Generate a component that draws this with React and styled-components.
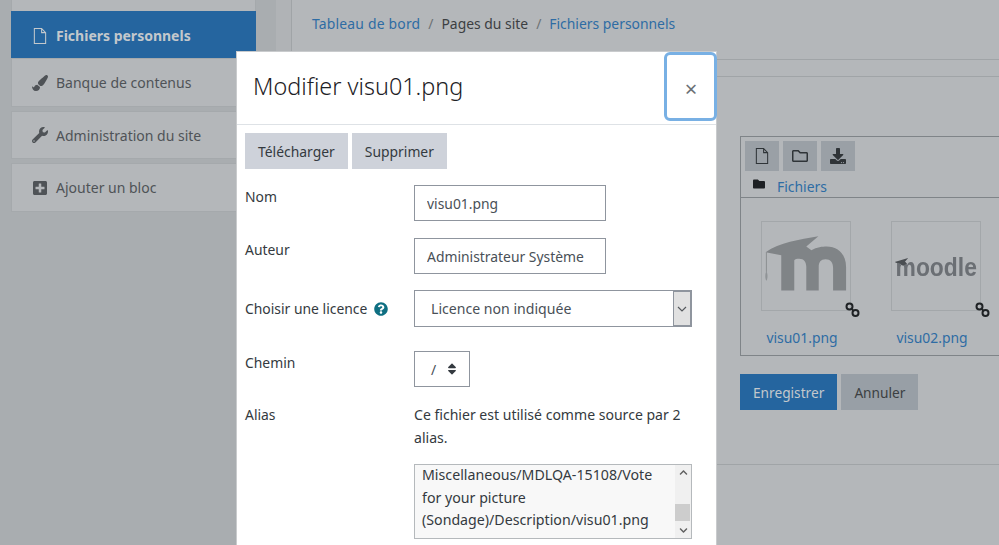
import { createGlobalStyle, styled } from "styled-components"
import {
    FaPaintBrush,
    FaWrench,
    FaPlusSquare,
    FaRegFolder,
    FaDownload,
    FaFolder,
    FaQuestionCircle,
    FaSort,
    FaChevronUp,
    FaChevronDown,
} from "react-icons/fa"

const GlobalStyle = createGlobalStyle`
    html, body {
        margin: 0;
        padding: 0;
    }
    * {
        box-sizing: border-box;
    }
    body {
        font-family: "Noto Sans", "Open Sans", sans-serif;
        font-size: 13.9px;
        color: #343a40;
    }
`

const Page = styled.div`
    position: relative;
    display: flex;
    width: 999px;
    height: 545px;
    overflow: hidden;
    background-color: #b4b7ba;
`
const Sidebar = styled.aside`
    flex: none;
    width: 292px;
    background-color: #b0b3b6;
    border-right: 1px solid #a0a4a7;
`
const SideColumn = styled.div`
    display: flex;
    flex-direction: column;
    width: 276px;
    height: 100%;
    padding: 0 20px 0 11px;
    background-color: #a9adb0;
`
const TopStub = styled.div`
    height: 11px;
    background-color: #b4b7ba;
    border: solid #a5a9ac;
    border-width: 0 1px;
`
const NavItem = styled.div`
    display: flex;
    align-items: center;
    gap: 8px;
    height: ${(props) => props.$height || 48}px;
    margin-bottom: ${(props) => props.$gap || 0}px;
    padding: ${(props) => (props.$active ? 2 : 0)}px 0 0 20px;
    color: ${(props) => (props.$active ? "#c3c8cc" : "#4f5357")};
    font-size: 14px;
    font-weight: ${(props) => (props.$active ? 700 : 400)};
    background-color: ${(props) => (props.$active ? "#25659f" : "#b4b7ba")};
    border: 1px solid ${(props) => (props.$active ? "#25659f" : "#a5a9ac")};
    svg {
        flex: none;
        width: 16px;
        height: 16px;
    }
`
const Main = styled.main`
    flex: 1;
    display: flex;
    flex-direction: column;
    min-width: 0;
`
const Breadcrumb = styled.nav`
    display: flex;
    align-items: center;
    gap: 8px;
    height: 60px;
    padding: 0 0 12px 20px;
    border-bottom: 1px solid #a0a4a7;
`
const Crumb = styled.span`
    color: ${(props) => (props.$link ? "#2e6ca4" : "#3c3f42")};
    &:first-child {
        letter-spacing: 0.2px;
    }
`
const Slash = styled.span`
    color: #6d7275;
`
const SubBar = styled.div`
    height: 17px;
    border-bottom: 1px solid #a0a4a7;
`
const Content = styled.div`
    height: 388px;
    padding: 59px 0 0 448px;
    border-bottom: 1px solid #a0a4a7;
`
const FileBox = styled.section`
    width: 280px;
    height: 220px;
    border: 1px solid #7f8488;
`
const BoxHeader = styled.div`
    height: 61px;
    padding: 4px 4px 0;
    border-bottom: 1px solid #7f8488;
`
const ToolRow = styled.div`
    display: flex;
    gap: 4px;
`
const ToolButton = styled.div`
    display: flex;
    align-items: center;
    justify-content: center;
    width: 34px;
    height: 30px;
    color: #2f3438;
    background-color: #9aa0a6;
    svg {
        width: 16px;
        height: 16px;
    }
`
const PathRow = styled.div`
    display: flex;
    align-items: center;
    gap: 12px;
    height: 26px;
    padding-left: 8px;
    color: #2e6ca4;
    svg {
        width: 12px;
        height: 12px;
        color: #1d2023;
    }
`
const PathLabel = styled.span`
    margin-top: 4px;
`
const ThumbRow = styled.div`
    display: flex;
    gap: 40px;
    padding: 23px 0 0 20px;
`
const ThumbCol = styled.div`
    display: flex;
    flex-direction: column;
    align-items: center;
    gap: 17px;
    width: 90px;
`
const Thumb = styled.div`
    position: relative;
    display: flex;
    align-items: center;
    justify-content: center;
    width: 90px;
    height: 90px;
    border: 1px solid #a3a7aa;
`
const ThumbName = styled.a`
    margin-right: 8px;
    color: #2e6ca4;
    white-space: nowrap;
`
const ChainBadge = styled.svg`
    position: absolute;
    right: -10px;
    bottom: -8px;
    width: 15px;
    height: 16px;
`
const Wordmark = styled.span`
    position: relative;
    margin-top: 2px;
    color: #6b6f74;
    font-family: "Liberation Sans", sans-serif;
    font-size: 26px;
    font-weight: 700;
    transform: scaleX(0.88);
    filter: blur(0.5px);
`
const WordHat = styled.svg`
    position: absolute;
    left: -1px;
    top: 6px;
    width: 18px;
    height: 10px;
`
const MoodleMark = styled.svg`
    width: 90px;
    height: 90px;
    filter: blur(0.4px);
`
const PageActions = styled.div`
    display: flex;
    gap: 4px;
    margin-top: 18px;
    font-size: 13.7px;
`
const Button = styled.button`
    height: 36px;
    padding: 0 13px;
    border: 0;
    border-radius: 0;
    font: inherit;
    color: ${(props) => props.$color};
    background-color: ${(props) => props.$bg};
`
const Modal = styled.div`
    position: absolute;
    left: 236px;
    top: 51px;
    width: 481px;
    height: 500px;
    background-color: #fff;
    border: 1px solid #c9cbcd;
`
const ModalHeader = styled.header`
    display: flex;
    justify-content: space-between;
    height: 73px;
    padding-left: 16px;
    border-bottom: 1px solid #dee2e6;
`
const ModalTitle = styled.h5`
    margin: 0;
    padding-top: 16px;
    color: #1d2125;
    font-size: 23.4px;
    font-weight: 300;
    line-height: 36px;
`
const CloseButton = styled.button`
    display: flex;
    align-items: center;
    justify-content: center;
    width: 53px;
    height: 69px;
    margin: 0 -1px 0 0;
    padding: 3px 0 0 1px;
    color: #6b7075;
    font-family: "Noto Sans", sans-serif;
    font-size: 22px;
    background-color: #fff;
    border: 3px solid #78b0e4;
    border-radius: 6px;
`
const ModalBody = styled.div`
    display: flex;
    flex-direction: column;
    padding: 8px 8px 0;
`
const FileActions = styled.div`
    display: flex;
    gap: 4px;
    margin-bottom: 16px;
`
const FieldRow = styled.div`
    display: grid;
    grid-template-columns: 169px 1fr;
    min-height: ${(props) => props.$height}px;
`
const FieldLabel = styled.label`
    display: flex;
    align-items: center;
    align-self: start;
    gap: 7px;
    height: 23px;
    margin-top: ${(props) => props.$top}px;
    color: #343a40;
    svg {
        width: 14px;
        height: 14px;
        color: #0f6f82;
    }
`
const TextInput = styled.input`
    width: 192px;
    height: 36px;
    padding: 0 12px;
    font: inherit;
    color: #495057;
    background-color: #fff;
    border: 1px solid #8f959e;
    border-radius: 0;
    outline: none;
`
const LicenceSelect = styled.div`
    display: flex;
    align-items: center;
    justify-content: space-between;
    width: 278px;
    height: 37px;
    padding-left: 16px;
    color: #495057;
    font-size: 14.1px;
    background-color: #fff;
    border: 1px solid #8f959e;
`
const SelectArrow = styled.div`
    display: flex;
    align-items: center;
    justify-content: center;
    width: 18px;
    height: 100%;
    color: #55595d;
    background-color: #e1e1e1;
    border: 1px solid #8f959e;
`
const PathSelect = styled.div`
    display: flex;
    align-items: center;
    gap: 11px;
    width: 56px;
    height: 36px;
    padding-left: 16px;
    color: #495057;
    border: 1px solid #8f959e;
    svg {
        width: 10px;
        height: 14px;
        color: #343a40;
    }
`
const AliasText = styled.p`
    width: 278px;
    margin: 0 0 15px;
    color: #343a40;
    font-size: 14.05px;
    line-height: 23px;
`
const AliasList = styled.div`
    display: flex;
    justify-content: space-between;
    width: 278px;
    height: 75px;
    overflow: hidden;
    background-color: #f8f8f8;
    border: 1px solid #b5b9bc;
`
const AliasItem = styled.div`
    width: 250px;
    margin-top: -1px;
    padding-left: 7px;
    color: #343a40;
    font-size: 14.2px;
    line-height: 22.6px;
`
const Scrollbar = styled.div`
    position: relative;
    display: flex;
    flex-direction: column;
    align-items: center;
    justify-content: space-between;
    flex: none;
    width: 16px;
    padding: 3px 0;
    color: #606060;
    background-color: #f0f0f0;
    svg {
        width: 9px;
        height: 9px;
    }
`
const ScrollThumb = styled.div`
    position: absolute;
    left: 0;
    top: 39px;
    width: 15px;
    height: 17px;
    background-color: #cdcdcd;
`

function FileIcon() {
    return (
        <svg viewBox="0 0 15 17">
            <path
                fill="none"
                stroke="currentColor"
                strokeWidth="1.100"
                d="M1.500 .6H9.200L13.500 4.900V16.400H1.500zM9.200 .6V4.900H13.500"
            />
        </svg>
    )
}

function MoodleIcon() {
    return (
        <MoodleMark viewBox="0 0 90 90">
            <path
                fill="#808487"
                d="M3.700 31C18 21 38 18 57.700 14.700L45.300 25l5.200 4C56 25.500 62 25 66 25c12 0 20 8 20 21v24H72.700V47c0-6-2.700-9-7.700-9s-7 3-7 8v24H45.300V46c0-5-2.300-8.500-7.300-8.500-2.500 0-4 .5-5 1.500v31H19.700V34z"
            />
            <path fill="none" stroke="#808487" strokeWidth="0.8" d="M4.500 31v20" />
            <path fill="#8f9396" d="M4.500 50c1.500 3 1.500 8 0 10c-1.500-2-1.500-7 0-10z" />
        </MoodleMark>
    )
}

function Chain() {
    return (
        <ChainBadge viewBox="0 0 15 16">
            <circle cx="4.500" cy="4.500" r="3" fill="none" stroke="#1f2225" strokeWidth="2" />
            <circle cx="10.500" cy="11" r="3" fill="none" stroke="#1f2225" strokeWidth="2" />
            <path stroke="#1f2225" strokeWidth="2" d="M6.500 6.500l2 2.500" />
        </ChainBadge>
    )
}

export default function App() {
    return (
        <Page>
            <GlobalStyle />
            <Sidebar>
                <SideColumn>
                    <TopStub />
                    <NavItem $active $height={47}>
                        <FileIcon />
                        Fichiers personnels
                    </NavItem>
                    <NavItem $height={49} $gap={4}>
                        <FaPaintBrush />
                        Banque de contenus
                    </NavItem>
                    <NavItem $gap={4}>
                        <FaWrench />
                        Administration du site
                    </NavItem>
                    <NavItem $height={49}>
                        <FaPlusSquare />
                        Ajouter un bloc
                    </NavItem>
                </SideColumn>
            </Sidebar>
            <Main>
                <Breadcrumb>
                    <Crumb $link>Tableau de bord</Crumb>
                    <Slash>/</Slash>
                    <Crumb>Pages du site</Crumb>
                    <Slash>/</Slash>
                    <Crumb $link>Fichiers personnels</Crumb>
                </Breadcrumb>
                <SubBar />
                <Content>
                    <FileBox>
                        <BoxHeader>
                            <ToolRow>
                                <ToolButton><FileIcon /></ToolButton>
                                <ToolButton><FaRegFolder /></ToolButton>
                                <ToolButton><FaDownload /></ToolButton>
                            </ToolRow>
                            <PathRow>
                                <FaFolder />
                                <PathLabel>Fichiers</PathLabel>
                            </PathRow>
                        </BoxHeader>
                        <ThumbRow>
                            <ThumbCol>
                                <Thumb>
                                    <MoodleIcon />
                                    <Chain />
                                </Thumb>
                                <ThumbName>visu01.png</ThumbName>
                            </ThumbCol>
                            <ThumbCol>
                                <Thumb>
                                    <Wordmark>
                                        moodle
                                        <WordHat viewBox="0 0 20 11">
                                            <path fill="#4a4e52" d="M0 4.500L17 0l-4 4 2.500 2-5 2.500-5-3-3 0z" />
                                        </WordHat>
                                    </Wordmark>
                                    <Chain />
                                </Thumb>
                                <ThumbName>visu02.png</ThumbName>
                            </ThumbCol>
                        </ThumbRow>
                    </FileBox>
                    <PageActions>
                        <Button $bg="#25659f" $color="#c3c8cc">Enregistrer</Button>
                        <Button $bg="#989fa6" $color="#3c3f42">Annuler</Button>
                    </PageActions>
                </Content>
            </Main>
            <Modal>
                <ModalHeader>
                    <ModalTitle>Modifier visu01.png</ModalTitle>
                    <CloseButton>×</CloseButton>
                </ModalHeader>
                <ModalBody>
                    <FileActions>
                        <Button $bg="#ced2da" $color="#343a40">Télécharger</Button>
                        <Button $bg="#ced2da" $color="#343a40">Supprimer</Button>
                    </FileActions>
                    <FieldRow $height={53}>
                        <FieldLabel $top={0}>Nom</FieldLabel>
                        <TextInput readOnly value="visu01.png" />
                    </FieldRow>
                    <FieldRow $height={52}>
                        <FieldLabel $top={0}>Auteur</FieldLabel>
                        <TextInput readOnly value="Administrateur Système" />
                    </FieldRow>
                    <FieldRow $height={61}>
                        <FieldLabel $top={7}>
                            Choisir une licence
                            <FaQuestionCircle />
                        </FieldLabel>
                        <LicenceSelect>
                            Licence non indiquée
                            <SelectArrow>
                                <svg width="10" height="6" viewBox="0 0 10 6">
                                    <path fill="none" stroke="currentColor" strokeWidth="1.200" d="M1 1l4 4 4-4" />
                                </svg>
                            </SelectArrow>
                        </LicenceSelect>
                    </FieldRow>
                    <FieldRow $height={52}>
                        <FieldLabel $top={0}>Chemin</FieldLabel>
                        <PathSelect>
                            /
                            <FaSort />
                        </PathSelect>
                    </FieldRow>
                    <FieldRow>
                        <FieldLabel $top={0}>Alias</FieldLabel>
                        <div>
                            <AliasText>Ce fichier est utilisé comme source par 2 alias.</AliasText>
                            <AliasList>
                                <AliasItem>
                                    Miscellaneous/MDLQA-15108/Vote for your picture (Sondage)/Description/visu01.png
                                </AliasItem>
                                <Scrollbar>
                                    <FaChevronUp />
                                    <ScrollThumb />
                                    <FaChevronDown />
                                </Scrollbar>
                            </AliasList>
                        </div>
                    </FieldRow>
                </ModalBody>
            </Modal>
        </Page>
    )
}
